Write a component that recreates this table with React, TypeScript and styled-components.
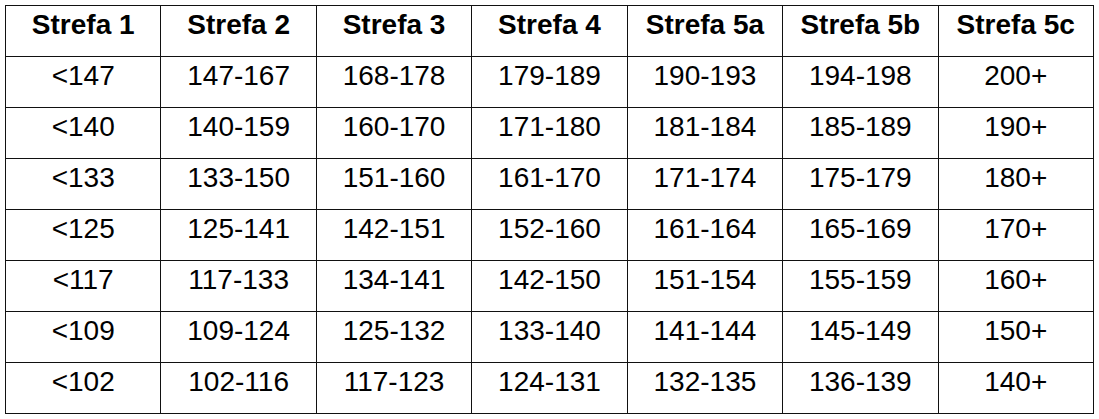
import styled, { createGlobalStyle } from 'styled-components';

const GlobalStyle = createGlobalStyle`
  body {
    margin: 0;
    background: #ffffff;
    font-family: "Liberation Sans", Arial, sans-serif;
  }
`;

const Page = styled.div`
  padding: 5px;
`;

const Table = styled.table`
  width: 1089px;
  border-collapse: collapse;
  table-layout: fixed;
  color: #000;
`;

const Cell = styled.td<{ $head?: boolean }>`
  height: 51px;
  padding: 3px 0 0;
  box-sizing: border-box;
  border: 1px solid #111;
  text-align: center;
  vertical-align: top;
  font-size: 28px;
  line-height: 32px;
  font-weight: ${(p) => (p.$head ? 700 : 400)};
`;

const headers = ['Strefa 1', 'Strefa 2', 'Strefa 3', 'Strefa 4', 'Strefa 5a', 'Strefa 5b', 'Strefa 5c'];

const rows = [
  ['<147', '147-167', '168-178', '179-189', '190-193', '194-198', '200+'],
  ['<140', '140-159', '160-170', '171-180', '181-184', '185-189', '190+'],
  ['<133', '133-150', '151-160', '161-170', '171-174', '175-179', '180+'],
  ['<125', '125-141', '142-151', '152-160', '161-164', '165-169', '170+'],
  ['<117', '117-133', '134-141', '142-150', '151-154', '155-159', '160+'],
  ['<109', '109-124', '125-132', '133-140', '141-144', '145-149', '150+'],
  ['<102', '102-116', '117-123', '124-131', '132-135', '136-139', '140+'],
];

export default function App() {
  return (
    <Page>
      <GlobalStyle />
      <Table>
        <tbody>
          <tr>
            {headers.map((h) => (
              <Cell key={h} $head>
                {h}
              </Cell>
            ))}
          </tr>
          {rows.map((row, i) => (
            <tr key={i}>
              {row.map((v, j) => (
                <Cell key={j}>{v}</Cell>
              ))}
            </tr>
          ))}
        </tbody>
      </Table>
    </Page>
  );
}
